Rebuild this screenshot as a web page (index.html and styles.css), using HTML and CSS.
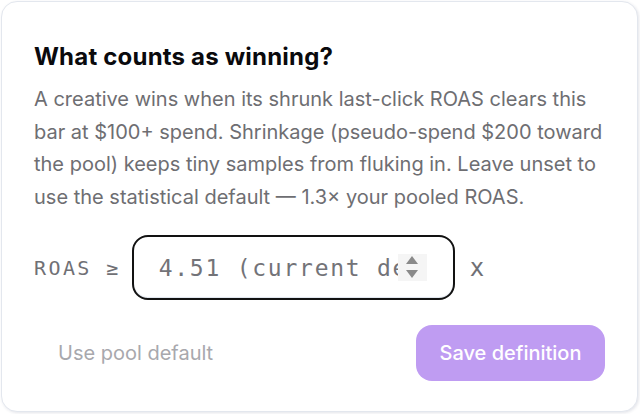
FILE: index.html
```html
<!DOCTYPE html>
<html>
<head>
<meta charset="utf-8">
<link rel="stylesheet" href="styles.css">
</head>
<body>
<div class="card">
  <h2 class="title">What counts as winning?</h2>
  <p class="desc">A creative wins when its shrunk last-click ROAS clears this bar at $100+ spend. Shrinkage (pseudo-spend $200 toward the pool) keeps tiny samples from fluking in. Leave unset to use the statistical default — 1.3× your pooled ROAS.</p>
  <div class="row">
    <span class="label">ROAS ≥</span>
    <div class="field">
      <input class="field-input" type="number" step="0.01" placeholder="4.51 (current default)">
      <svg class="spin" width="29" height="27" viewBox="0 0 29 27" aria-hidden="true">
        <rect x="0" y="0" width="29" height="27" fill="#f5f5f5"/>
        <polygon points="8,10 14,2 20,10" fill="#8a8a8a"/>
        <polygon points="8,16 20,16 14,24" fill="#8a8a8a"/>
      </svg>
    </div>
    <span class="unit">x</span>
  </div>
  <div class="actions">
    <button class="btn-ghost" type="button">Use pool default</button>
    <button class="btn-primary" type="button">Save definition</button>
  </div>
</div>
</body>
</html>
```
FILE: styles.css
```css
* { box-sizing: border-box; }
html, body { margin: 0; padding: 0; background: #ffffff; }
body { padding: 1px 2px 2px 1px; height: 414px; }
.card {
  height: 411px;
  background: #fff;
  border: 1px solid #e3e7ee;
  border-radius: 16px;
  box-shadow: 1px 1px 3px rgba(30, 40, 80, 0.12);
  padding: 39px 32px 30px 32px;
  font-family: Inter, "Noto Sans", sans-serif;
  display: flex;
  flex-direction: column;
}
.title {
  margin: 0;
  font-size: 24px;
  line-height: 32px;
  font-weight: 700;
  letter-spacing: 0.2px;
  color: #0a0a0d;
}
.desc {
  margin: 10px 0 0 0;
  font-size: 20px;
  line-height: 32.5px;
  color: #6e6e72;
}
.row {
  margin-top: 22px;
  display: flex;
  align-items: center;
  gap: 11px;
}
.label {
  font-family: "DejaVu Sans Mono", monospace;
  font-size: 20px;
  letter-spacing: 0.12em;
  color: #707075;
}
.unit {
  margin-left: 4px;
  font-family: "DejaVu Sans Mono", monospace;
  font-size: 24px;
  color: #707075;
}
.field {
  width: 323px;
  height: 65px;
  display: flex;
  align-items: center;
  border: 2px solid #121212;
  border-radius: 16px;
  box-shadow: inset 0 -1px 1px #dfe5ee;
  padding: 0 26px 0 25px;
  background: #fff;
}
.field-input {
  flex: 1;
  min-width: 0;
  height: 100%;
  border: none;
  outline: none;
  padding: 0;
  background: transparent;
  font-family: "DejaVu Sans Mono", monospace;
  font-size: 23px;
  letter-spacing: 1.75px;
  color: #333;
  -moz-appearance: textfield;
}
.field-input::-webkit-inner-spin-button,
.field-input::-webkit-outer-spin-button { -webkit-appearance: none; margin: 0; }
.field-input::placeholder { color: #737378; }
.spin { flex: none; display: block; }
.actions {
  margin-top: auto;
  display: flex;
  justify-content: space-between;
  align-items: center;
}
.btn-ghost {
  font-family: Inter, "Noto Sans", sans-serif;
  font-size: 20px;
  color: #a8a8ad;
  background: transparent;
  border: none;
  padding: 0 24px;
  height: 56px;
}
.btn-primary {
  font-family: Inter, "Noto Sans", sans-serif;
  font-size: 20px;
  font-weight: 500;
  color: #fff;
  background: #bf9cf2;
  border: none;
  border-radius: 16px;
  width: 189px;
  height: 56px;
}
```
